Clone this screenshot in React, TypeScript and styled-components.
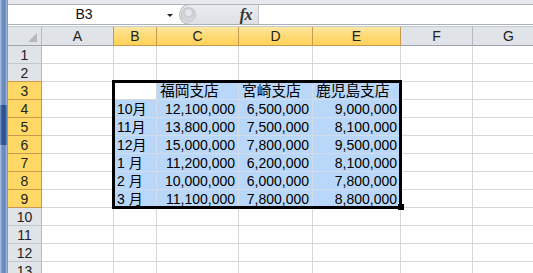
import React from 'react';
import styled, { createGlobalStyle } from 'styled-components';

const GlobalStyle = createGlobalStyle`
  html, body { margin: 0; padding: 0; background: #fff; overflow: hidden; }
  body { font-family: "Liberation Sans", "Noto Sans CJK JP", Arial, sans-serif; }
`;

const Window = styled.div`
  width: 533px;
  height: 273px;
  overflow: hidden;
  display: flex;
  background: #fff;
`;

const EdgeStrip = styled.div`
  flex: 0 0 8px;
  display: flex;
  flex-direction: column;
  border-right: 1px solid #8e99a8;
  box-sizing: border-box;
`;

const EdgeSeg = styled.div<{ $dark?: boolean; $h: number }>`
  flex: 0 0 ${(p) => p.$h}px;
  background: ${(p) =>
    p.$dark
      ? 'linear-gradient(to right, #7d9ccb 0, #2f5597 2px, #2a4f8f 5px, #6d8ec2 7px)'
      : 'linear-gradient(to right, #b6c9e4 0, #6f8fc3 2px, #6687bd 5px, #a9bfdf 7px)'};
`;

const Main = styled.div`
  flex: 1;
  display: flex;
  flex-direction: column;
  overflow: hidden;
  position: relative;
`;

const TopBand = styled.div`
  height: 4px;
  background: #e6e9ed;
  border-bottom: 1px solid #aeb3b9;
`;

const FormulaBar = styled.div`
  height: 19px;
  display: flex;
  align-items: stretch;
  background: #fff;
`;

const NameBox = styled.div`
  width: 152px;
  font-size: 14px;
  line-height: 19px;
  text-align: center;
  color: #111;
`;

const DropButton = styled.div`
  width: 19px;
  display: flex;
  align-items: center;
  justify-content: center;
  &::after {
    content: '';
    width: 0;
    height: 0;
    border-left: 3px solid transparent;
    border-right: 3px solid transparent;
    border-top: 3px solid #222;
    margin-top: 1px;
  }
`;

const FxPill = styled.div`
  width: 80px;
  margin: -1px 0;
  display: flex;
  align-items: center;
  justify-content: space-between;
  background: linear-gradient(#e9ecef, #dde1e5);
  border: 1px solid #b3b8be;
  border-right: 1px solid #c2c6cb;
  border-radius: 11px 0 0 11px;
  padding: 0 6px 0 1px;
  box-sizing: border-box;
`;

const PillKnob = styled.div`
  width: 15px;
  height: 15px;
  border-radius: 50%;
  background: radial-gradient(circle at 50% 35%, #e3e6ea 0 3px, #c9cdd2 4px, #d6d9dd 7px);
  border: 1px solid #c0c4c9;
  box-sizing: border-box;
`;

const FxLabel = styled.span`
  font-family: "Liberation Serif", "DejaVu Serif", serif;
  font-style: italic;
  font-weight: bold;
  font-size: 16px;
  color: #333;
  letter-spacing: -0.5px;
  line-height: 19px;
`;

const FormulaInput = styled.div`
  flex: 1;
  background: #fff;
`;

const BarDivider = styled.div`
  height: 1px;
  background: #fbfcfd;
  border-top: 1px solid #aab0b7;
  border-bottom: 1px solid #c7ccd2;
`;

const SheetWrap = styled.div`
  position: relative;
  flex: 1;
  overflow: hidden;
`;

const Sheet = styled.div`
  display: grid;
  grid-template-columns: 34px 72px 43px 82px 74px 88px 72px 72px;
  grid-template-rows: 19px repeat(13, 18px);
  width: 537px;
`;

const HeaderCell = styled.div<{ $sel?: boolean }>`
  box-sizing: border-box;
  border-right: 1px solid ${(p) => (p.$sel ? '#c99a4d' : '#b5bac0')};
  border-bottom: 1px solid ${(p) => (p.$sel ? '#c99a4d' : '#9ea4ac')};
  background: ${(p) =>
    p.$sel ? 'linear-gradient(#fde7a2, #fddb78 45%, #ffd25a)' : '#e0e3e8'};
  ${(p) => (p.$sel ? 'box-shadow: -1px 0 0 #c99a4d;' : '')}
  font-size: 14px;
  line-height: 15px;
  padding-top: 2px;
  text-align: center;
  color: #222;
`;

const Corner = styled.div`
  box-sizing: border-box;
  border-right: 1px solid #b5bac0;
  border-bottom: 1px solid #9ea4ac;
  background: #e0e3e8;
  position: relative;
  &::after {
    content: '';
    position: absolute;
    right: 4px;
    bottom: 3px;
    width: 0;
    height: 0;
    border-left: 9px solid transparent;
    border-bottom: 9px solid #b4b9c0;
  }
`;

const RowHead = styled.div<{ $sel?: boolean; $first?: boolean }>`
  box-sizing: border-box;
  border-right: 1px solid ${(p) => (p.$sel ? '#c99a4d' : '#b5bac0')};
  border-bottom: 1px solid ${(p) => (p.$sel ? '#c99a4d' : '#c3c7cd')};
  background: ${(p) => (p.$sel ? '#ffd865' : '#e0e3e8')};
  ${(p) => (p.$first ? 'box-shadow: 0 -1px 0 #c99a4d;' : '')}
  font-size: 14px;
  line-height: 15px;
  padding-top: 2px;
  text-align: center;
  color: #222;
`;

const Cell = styled.div<{ $sel?: boolean; $right?: boolean; $jp?: boolean }>`
  box-sizing: border-box;
  border-right: 1px solid ${(p) => (p.$sel ? '#d2dceb' : '#d7d7d7')};
  border-bottom: 1px solid ${(p) => (p.$sel ? '#d2dceb' : '#d7d7d7')};
  background: ${(p) => (p.$sel ? '#b8d7f9' : '#fff')};
  font-size: ${(p) => (p.$jp ? '14.7px' : '14px')};
  line-height: 15px;
  padding: 2px 3px 0 3px;
  text-align: ${(p) => (p.$right ? 'right' : 'left')};
  white-space: nowrap;
  overflow: hidden;
  color: #000;
`;

const SelectionFrame = styled.div`
  position: absolute;
  left: 104px;
  top: 53px;
  width: 290px;
  height: 129px;
  border: 3px solid #000;
  box-sizing: border-box;
  pointer-events: none;
`;

const FillHandle = styled.div`
  position: absolute;
  left: 390px;
  top: 177px;
  width: 6px;
  height: 6px;
  background: #000;
`;

const columns = ['A', 'B', 'C', 'D', 'E', 'F', 'G'];
const selCols = ['B', 'C', 'D', 'E'];

type Row = [string, string, string, string];
const table: Record<number, Row> = {
  3: ['', '福岡支店', '宮崎支店', '鹿児島支店'],
  4: ['10月', '12,100,000', '6,500,000', '9,000,000'],
  5: ['11月', '13,800,000', '7,500,000', '8,100,000'],
  6: ['12月', '15,000,000', '7,800,000', '9,500,000'],
  7: ['1 月', '11,200,000', '6,200,000', '8,100,000'],
  8: ['2 月', '10,000,000', '6,000,000', '7,800,000'],
  9: ['3 月', '11,100,000', '7,800,000', '8,800,000'],
};

export default function App() {
  const rows = Array.from({ length: 13 }, (_, i) => i + 1);
  return (
    <>
      <GlobalStyle />
      <Window>
        <EdgeStrip>
          <EdgeSeg $h={105} />
          <EdgeSeg $h={40} $dark />
          <EdgeSeg $h={128} />
        </EdgeStrip>
        <Main>
          <TopBand />
          <FormulaBar>
            <NameBox>B3</NameBox>
            <DropButton />
            <FxPill>
              <PillKnob />
              <FxLabel>fx</FxLabel>
            </FxPill>
            <FormulaInput />
          </FormulaBar>
          <BarDivider />
          <SheetWrap>
            <Sheet>
              <Corner />
              {columns.map((c) => (
                <HeaderCell key={c} $sel={selCols.includes(c)}>
                  {c}
                </HeaderCell>
              ))}
              {rows.map((r) => {
                const data = table[r];
                const rowSel = r >= 3 && r <= 9;
                return (
                  <React.Fragment key={r}>
                    <RowHead $sel={rowSel} $first={r === 3}>
                      {r}
                    </RowHead>
                    {columns.map((c, ci) => {
                      const inData = data && ci >= 1 && ci <= 4;
                      const text = inData ? data[ci - 1] : '';
                      const sel = rowSel && inData && !(r === 3 && c === 'B');
                      const right = inData && r >= 4 && ci >= 2;
                      return (
                        <Cell key={c} $sel={sel} $right={right} $jp={r === 3}>
                          {text}
                        </Cell>
                      );
                    })}
                  </React.Fragment>
                );
              })}
            </Sheet>
            <SelectionFrame />
            <FillHandle />
          </SheetWrap>
        </Main>
      </Window>
    </>
  );
}
